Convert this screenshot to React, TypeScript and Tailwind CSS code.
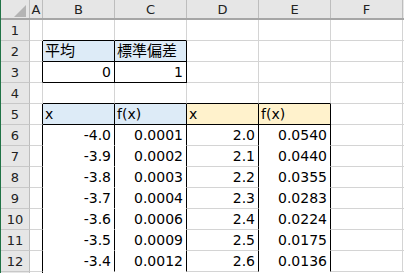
import React from "react";

type Line = "g" | "k" | "w" | "h";

const RIGHT: Record<Line, string> = {
  g: "border-r-[#d4d4d4]",
  k: "border-r-black",
  w: "border-r-white",
  h: "border-r-[#bdbdbd]",
};

const BOTTOM: Record<Line, string> = {
  g: "border-b-[#d4d4d4]",
  k: "border-b-black",
  w: "border-b-white",
  h: "border-b-[#c8c8c8]",
};

const WIDTHS = ["w-[13px]", "w-[72px]", "w-[72px]", "w-[72px]", "w-[72px]", "w-[72px]"];

type CellSpec = {
  text?: string;
  right?: boolean;
  cjk?: boolean;
  bg?: string;
  r: Line;
  b: Line;
};

function Cell({ spec, w }: { spec: CellSpec; w: string }) {
  return (
    <div
      className={`${w} h-[21px] shrink-0 border-r border-b ${RIGHT[spec.r]} ${BOTTOM[spec.b]} ${spec.bg ?? "bg-white"} overflow-hidden whitespace-nowrap text-[14px] leading-[20px] text-black ${spec.right ? "text-right pr-[3px]" : "text-left pl-[2px]"}`}
    >
      {spec.cjk ? <span className="text-[15px]">{spec.text}</span> : spec.text}
    </div>
  );
}

const blank = (r: Line = "g", b: Line = "g"): CellSpec => ({ r, b });

const xs = ["-4.0", "-3.9", "-3.8", "-3.7", "-3.6", "-3.5", "-3.4"];
const fx = ["0.0001", "0.0002", "0.0003", "0.0004", "0.0006", "0.0009", "0.0012"];
const xs2 = ["2.0", "2.1", "2.2", "2.3", "2.4", "2.5", "2.6"];
const fx2 = ["0.0540", "0.0440", "0.0355", "0.0283", "0.0224", "0.0175", "0.0136"];

const rows: CellSpec[][] = [
  // 1
  [blank(), blank("g", "k"), blank("g", "k"), blank(), blank(), blank()],
  // 2
  [
    blank("k"),
    { text: "平均", cjk: true, bg: "bg-[#ddebf7]", r: "k", b: "k" },
    { text: "標準偏差", cjk: true, bg: "bg-[#ddebf7]", r: "k", b: "k" },
    blank(),
    blank(),
    blank(),
  ],
  // 3
  [
    blank("k"),
    { text: "0", right: true, r: "k", b: "k" },
    { text: "1", right: true, r: "k", b: "k" },
    blank(),
    blank(),
    blank(),
  ],
  // 4
  [blank(), blank("g", "k"), blank("g", "k"), blank("g", "k"), blank("g", "k"), blank()],
  // 5
  [
    blank("k"),
    { text: "x", bg: "bg-[#ddebf7]", r: "k", b: "k" },
    { text: "f(x)", bg: "bg-[#ddebf7]", r: "k", b: "k" },
    { text: "x", bg: "bg-[#fff2cc]", r: "k", b: "k" },
    { text: "f(x)", bg: "bg-[#fff2cc]", r: "k", b: "k" },
    blank(),
  ],
  ...xs.map((x, i) => [
    blank("k"),
    { text: x, right: true, r: "k" as Line, b: "w" as Line },
    { text: fx[i], right: true, r: "k" as Line, b: "w" as Line },
    { text: xs2[i], right: true, r: "k" as Line, b: "g" as Line },
    { text: fx2[i], right: true, r: "k" as Line, b: "w" as Line },
    blank(),
  ]),
];

export default function App() {
  return (
    <div
      className="flex h-[273px] w-[404px] overflow-hidden bg-white"
      style={{ fontFamily: '"DejaVu Sans", "Noto Sans CJK JP", sans-serif' }}
    >
      <div className="w-px shrink-0 bg-[#217346]" />
      <div className="flex flex-col">
        {/* column headers */}
        <div className="flex h-[20px] shrink-0 border-b-2 border-b-[#a6a6a6] bg-[#e6e6e6]">
          <div className="relative w-[29px] shrink-0 border-r border-r-[#bdbdbd]">
            <svg className="absolute right-[3px] bottom-[1px]" width="12" height="12" viewBox="0 0 12 12">
              <polygon points="12,0 12,12 0,12" fill="#b4b4b4" />
            </svg>
          </div>
          {["A", "B", "C", "D", "E", "F"].map((c, i) => (
            <div
              key={c}
              className={`${WIDTHS[i]} shrink-0 border-r border-r-[#bdbdbd] pt-px text-center text-[13px] leading-[17px] text-[#222]`}
            >
              {c}
            </div>
          ))}
          <div className="w-[4px] shrink-0" />
        </div>
        {rows.map((row, ri) => (
          <div key={ri} className="flex">
            <div className="h-[21px] w-[29px] shrink-0 border-r border-b border-r-[#bdbdbd] border-b-[#c8c8c8] bg-[#e6e6e6] pt-[2px] text-center text-[13px] leading-[18px] text-[#222]">
              {ri + 1}
            </div>
            {row.map((spec, ci) => (
              <Cell key={ci} spec={spec} w={WIDTHS[ci]} />
            ))}
            <div className="h-[21px] w-[4px] shrink-0 border-b border-b-[#d4d4d4]" />
          </div>
        ))}
        <div className="flex">
          <div className="h-[10px] w-[29px] shrink-0 border-r border-r-[#bdbdbd] bg-[#e6e6e6]" />
          <div className="h-[10px] w-[13px] shrink-0 border-r border-r-black" />
        </div>
      </div>
    </div>
  );
}
